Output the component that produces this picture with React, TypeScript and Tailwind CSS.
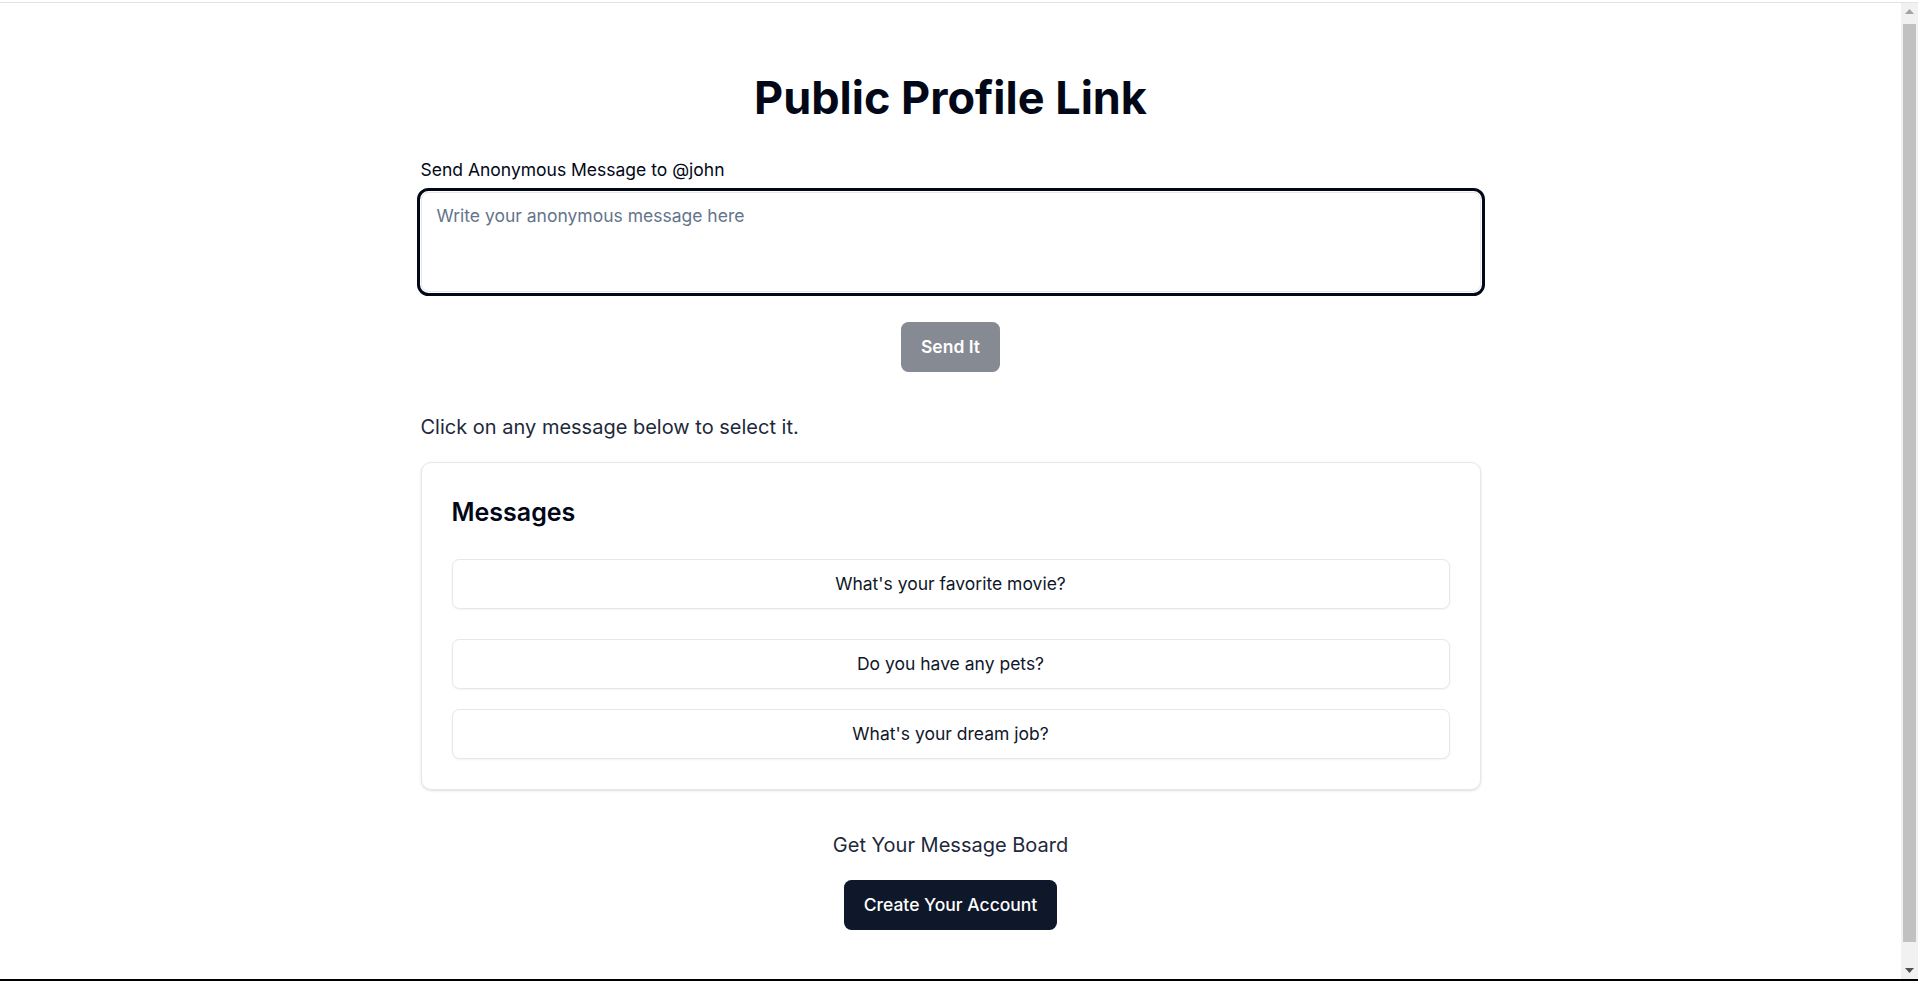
import { useState } from "react";

const messages = [
  "What's your favorite movie?",
  "Do you have any pets?",
  "What's your dream job?",
];

function Scrollbar() {
  return (
    <div className="flex w-[17px] shrink-0 flex-col bg-[#f1f1f1]">
      <div className="flex h-[17px] shrink-0 items-center justify-center">
        <svg width="9" height="6" viewBox="0 0 9 6">
          <path d="M4.5 0 L9 5 L0 5 Z" fill="#a3a3a3" />
        </svg>
      </div>
      <div className="mx-[2px] mt-[4px] h-[918px] bg-[#c1c1c1]" />
      <div className="flex-1" />
      <div className="flex h-[17px] shrink-0 items-center justify-center">
        <svg width="9" height="6" viewBox="0 0 9 6">
          <path d="M0 0 L9 0 L4.5 5 Z" fill="#505050" />
        </svg>
      </div>
    </div>
  );
}

export default function App() {
  const [content, setContent] = useState("");

  return (
    <div className="flex h-screen flex-col border-b-2 border-black bg-white font-['Inter',_'Liberation_Sans',_sans-serif] text-[#020817]">
      <div className="h-[3px] shrink-0 border-b border-[#e3e3e3] bg-white" />
      <div className="flex min-h-0 flex-1">
        <div className="min-w-0 flex-1 overflow-y-auto [scrollbar-width:none]">
          <div className="mx-auto my-[40px] w-full max-w-[1120px] rounded-[5px] bg-white p-[30px]">
            <h1 className="mb-[34px] text-center text-[45px] leading-[50px] font-bold">Public Profile Link</h1>

            <form
              className="space-y-[30px]"
              onSubmit={(e) => {
                e.preventDefault();
              }}
            >
              <div className="space-y-[10px]">
                <label htmlFor="content" className="block text-[17.5px] leading-[25px] font-normal">
                  Send Anonymous Message to @john
                </label>
                <textarea
                  id="content"
                  value={content}
                  onChange={(e) => setContent(e.target.value)}
                  placeholder="Write your anonymous message here"
                  className="block h-[100px] w-full resize-none rounded-[7.5px] border border-[#e2e8f0] bg-white px-[15px] py-[10px] text-[17.5px] leading-[25px] text-[#020817] outline-[3px] outline-offset-[1px] outline-[#020817] outline-solid placeholder:text-[#64748b]"
                />
              </div>
              <div className="flex justify-center">
                <button
                  type="submit"
                  disabled={!content}
                  className="h-[50px] rounded-[7.5px] bg-[#0f172a] px-[20px] text-[17.5px] font-semibold text-white disabled:opacity-50"
                >
                  Send It
                </button>
              </div>
            </form>

            <div className="my-[40px] space-y-[20px]">
              <p className="text-[20px] leading-[30px] text-[#1e293b]">Click on any message below to select it.</p>
              <div className="rounded-[10px] border border-[#e2e8f0] bg-white shadow-sm">
                <div className="px-[30px] pt-[32px] pb-[29px]">
                  <h3 className="text-[25px] leading-[35px] font-semibold">Messages</h3>
                </div>
                <div className="flex flex-col px-[30px] pb-[30px]">
                  {messages.map((m, i) => (
                    <button
                      key={m}
                      type="button"
                      onClick={() => setContent(m)}
                      className={`h-[50px] w-full rounded-[7.5px] border border-[#e2e8f0] bg-white px-[20px] text-[17.5px] font-normal text-[#0f172a] shadow-[0_1px_2px_rgba(0,0,0,0.05)] ${
                        i === 0 ? "mb-[30px]" : i === 1 ? "mb-[20px]" : ""
                      }`}
                    >
                      {m}
                    </button>
                  ))}
                </div>
              </div>
            </div>

            <div className="text-center">
              <p className="mb-[20px] text-[20px] leading-[30px] text-[#1e293b]">Get Your Message Board</p>
              <a
                href="#"
                className="inline-flex h-[50px] items-center justify-center rounded-[7.5px] bg-[#0f172a] px-[20px] text-[17.5px] font-medium text-white"
              >
                Create Your Account
              </a>
            </div>
          </div>
        </div>
        <Scrollbar />
      </div>
    </div>
  );
}
